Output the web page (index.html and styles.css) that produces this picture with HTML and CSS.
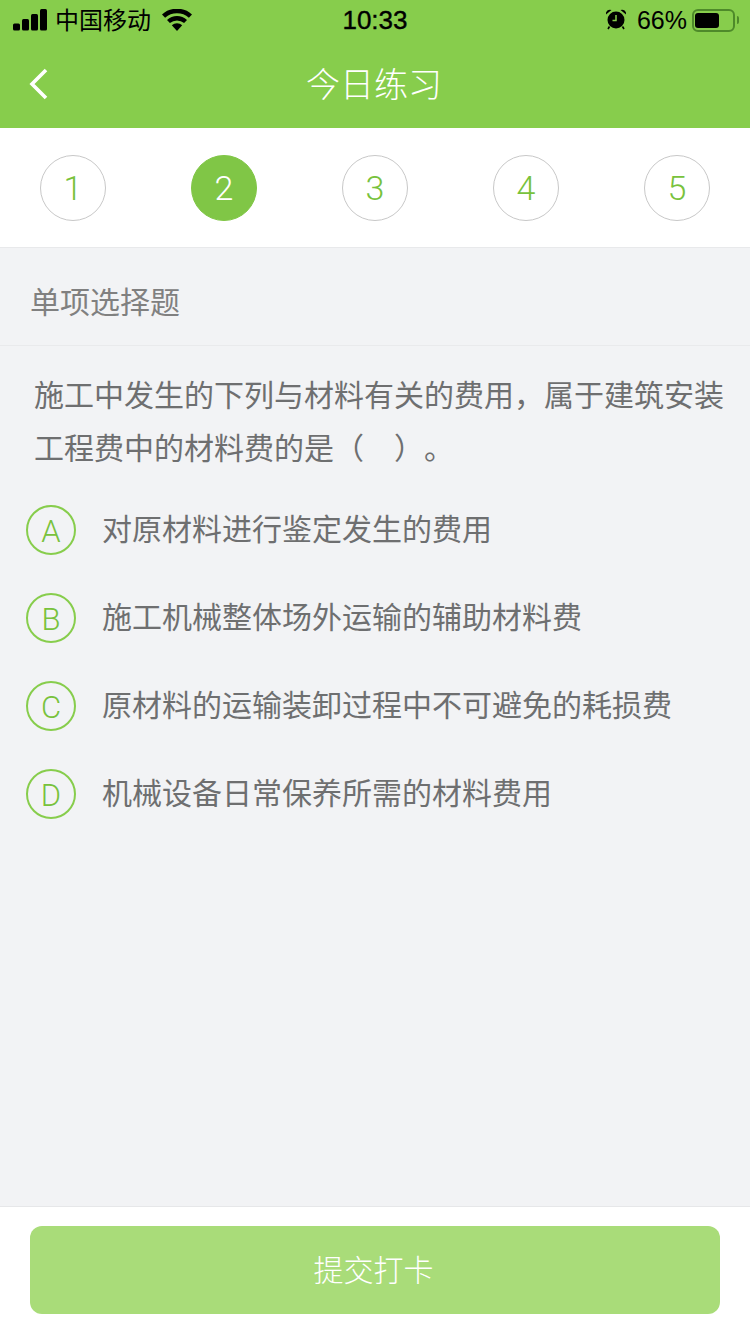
FILE: index.html
```html
<!DOCTYPE html>
<html lang="zh-CN">
<head>
    <meta charset="UTF-8">
    <title>今日练习</title>
    <link rel="stylesheet" href="styles.css">
</head>
<body>
<div class="page">
    <header class="top">
        <div class="status">
            <div class="status-left">
                <svg class="signal" width="34" height="22" viewBox="0 0 34 22">
                    <rect x="0" y="14.500" width="7" height="7" rx="1.500"/>
                    <rect x="9" y="10" width="7" height="11.500" rx="1.500"/>
                    <rect x="18" y="5" width="7" height="16.500" rx="1.500"/>
                    <rect x="27" y="0" width="7" height="21.500" rx="1.500"/>
                </svg>
                <span class="carrier">中国移动</span>
                <svg class="wifi" width="30" height="22" viewBox="0 0 30 22">
                    <path d="M15 22 9.800 16.200a8 8 0 0 1 10.400 0Z"/>
                    <path d="M7.900 14 5 10.900a15 15 0 0 1 20 0L22.100 14a11 11 0 0 0-14.200 0Z"/>
                    <path d="M3.100 8.700 0 5.400a22.500 22.500 0 0 1 30 0l-3.100 3.300a18 18 0 0 0-23.800 0Z"/>
                </svg>
            </div>
            <span class="clock">10:33</span>
            <div class="status-right">
                <svg class="alarm" width="22" height="22" viewBox="0 0 22 22">
                    <circle cx="11" cy="12" r="8.500"/>
                    <path d="M1 6.500a4 4 0 0 1 5.500-4.500ZM21 6.500a4 4 0 0 0-5.500-4.500Z"/>
                    <path d="M4.500 18.500 3 21M17.500 18.500 19 21" stroke="#000" stroke-width="1.600" fill="none"/>
                    <path d="M11 7v5.500H7.500" stroke="#87cd4c" stroke-width="1.500" fill="none"/>
                </svg>
                <span class="percent">66%</span>
                <div class="battery"><div class="battery-level"></div></div>
                <div class="battery-cap"></div>
            </div>
        </div>
        <div class="nav">
            <svg class="back" width="22" height="34" viewBox="0 0 22 34">
                <path d="M18 3 4 17l14 14" fill="none" stroke="#fff" stroke-width="3.600"/>
            </svg>
            <h1 class="title">今日练习</h1>
        </div>
    </header>

    <div class="steps">
        <div class="step">1</div>
        <div class="step active">2</div>
        <div class="step">3</div>
        <div class="step">4</div>
        <div class="step">5</div>
    </div>

    <main class="content">
        <div class="kind">单项选择题</div>
        <p class="question">施工中发生的下列与材料有关的费用，属于建筑安装工程费中的材料费的是（　）。</p>
        <ul class="options">
            <li class="option"><span class="letter">A</span><span class="option-text">对原材料进行鉴定发生的费用</span></li>
            <li class="option"><span class="letter">B</span><span class="option-text">施工机械整体场外运输的辅助材料费</span></li>
            <li class="option"><span class="letter">C</span><span class="option-text">原材料的运输装卸过程中不可避免的耗损费</span></li>
            <li class="option"><span class="letter">D</span><span class="option-text">机械设备日常保养所需的材料费用</span></li>
        </ul>
    </main>

    <footer class="bottom">
        <button class="submit" type="button">提交打卡</button>
    </footer>
</div>
</body>
</html>
```
FILE: styles.css
```css
html, body {
    margin: 0;
    padding: 0;
}

body {
    width: 750px;
    height: 1334px;
    overflow: hidden;
    font-family: "Liberation Sans", "Noto Sans CJK SC", sans-serif;
    background-color: #f2f3f5;
}

.page {
    height: 1334px;
    display: flex;
    flex-direction: column;
}

/* green header */
.top {
    height: 128px;
    background-color: #87cd4c;
}

.status {
    height: 40px;
    padding: 0 13px;
    display: flex;
    align-items: center;
    justify-content: space-between;
    position: relative;
    color: #000;
}

.status-left, .status-right {
    display: flex;
    align-items: center;
}

.signal {
    margin-top: -1px;
}

.carrier {
    margin-left: 8px;
    font-size: 24px;
    line-height: 32px;
    margin-top: 2px;
}

.wifi {
    margin-left: 11px;
}

.clock {
    position: absolute;
    left: 0;
    right: 0;
    text-align: center;
    font-size: 26px;
    font-weight: 500;
    line-height: 42px;
    -webkit-text-stroke: 0.4px #000;
}

.status-right {
    margin-right: -2px;
}

.alarm {
    margin-right: 10px;
    margin-top: -2px;
}

.percent {
    font-size: 25px;
    line-height: 42px;
    margin-right: 5px;
}

.battery {
    width: 43px;
    height: 23px;
    box-sizing: border-box;
    border: 2px solid #4e8a2a;
    border-radius: 6px;
    padding: 2px 1px;
}

.battery-level {
    width: 24px;
    height: 15px;
    background-color: #000;
    border-radius: 3px;
}

.battery-cap {
    width: 2px;
    height: 8px;
    margin-left: 2px;
    background-color: #4e8a2a;
    border-radius: 0 2px 2px 0;
}

.nav {
    height: 88px;
    display: flex;
    align-items: center;
    justify-content: center;
    position: relative;
}

.back {
    position: absolute;
    left: 28px;
    top: 27px;
}

.title {
    margin: -4px 2px 0 0;
    font-size: 34px;
    font-weight: 300;
    color: #fff;
}

/* question numbers */
.steps {
    height: 120px;
    box-sizing: border-box;
    padding: 27px 40px 0;
    background-color: #fff;
    border-bottom: 1px solid #e8e9eb;
    display: flex;
    justify-content: space-between;
}

.step {
    width: 66px;
    height: 66px;
    box-sizing: border-box;
    border: 1px solid #c8c8c8;
    border-radius: 50%;
    display: flex;
    align-items: center;
    justify-content: center;
    font-family: Roboto, "Liberation Sans", sans-serif;
    font-size: 34px;
    font-weight: 300;
    color: #78c23c;
}

.step.active {
    background-color: #80c646;
    border-color: #80c646;
    color: #fff;
}

.content {
    flex: 1;
}

.kind {
    height: 98px;
    box-sizing: border-box;
    padding-left: 30px;
    border-bottom: 1px solid #e9eaec;
    font-size: 30px;
    line-height: 110px;
    color: #808080;
}

.question {
    margin: 23px 24px 0 34px;
    font-size: 30px;
    line-height: 53px;
    color: #6e6f70;
    text-spacing-trim: space-all;
}

.options {
    margin: 30px 0 0;
    padding: 0 0 0 26px;
    list-style: none;
}

.option {
    height: 50px;
    margin-bottom: 38px;
    display: flex;
    align-items: center;
    font-size: 30px;
    color: #6e6f70;
}

.option-text {
    padding-bottom: 6px;
}

.letter {
    width: 50px;
    height: 50px;
    box-sizing: border-box;
    margin-right: 26px;
    padding-top: 2px;
    border: 2px solid #87cd4c;
    border-radius: 50%;
    display: flex;
    align-items: center;
    justify-content: center;
    font-family: Roboto, "Liberation Sans", sans-serif;
    font-size: 31px;
    font-weight: 300;
    color: #78c23c;
}

.bottom {
    height: 128px;
    box-sizing: border-box;
    padding: 19px 30px 0;
    background-color: #fff;
    border-top: 1px solid #e6e7e9;
}

.submit {
    display: block;
    width: 690px;
    height: 88px;
    padding: 0 3px 5px 0;
    border: none;
    border-radius: 12px;
    background-color: #a9dc79;
    color: #fff;
    font-family: inherit;
    font-size: 30px;
    font-weight: 300;
}
```
